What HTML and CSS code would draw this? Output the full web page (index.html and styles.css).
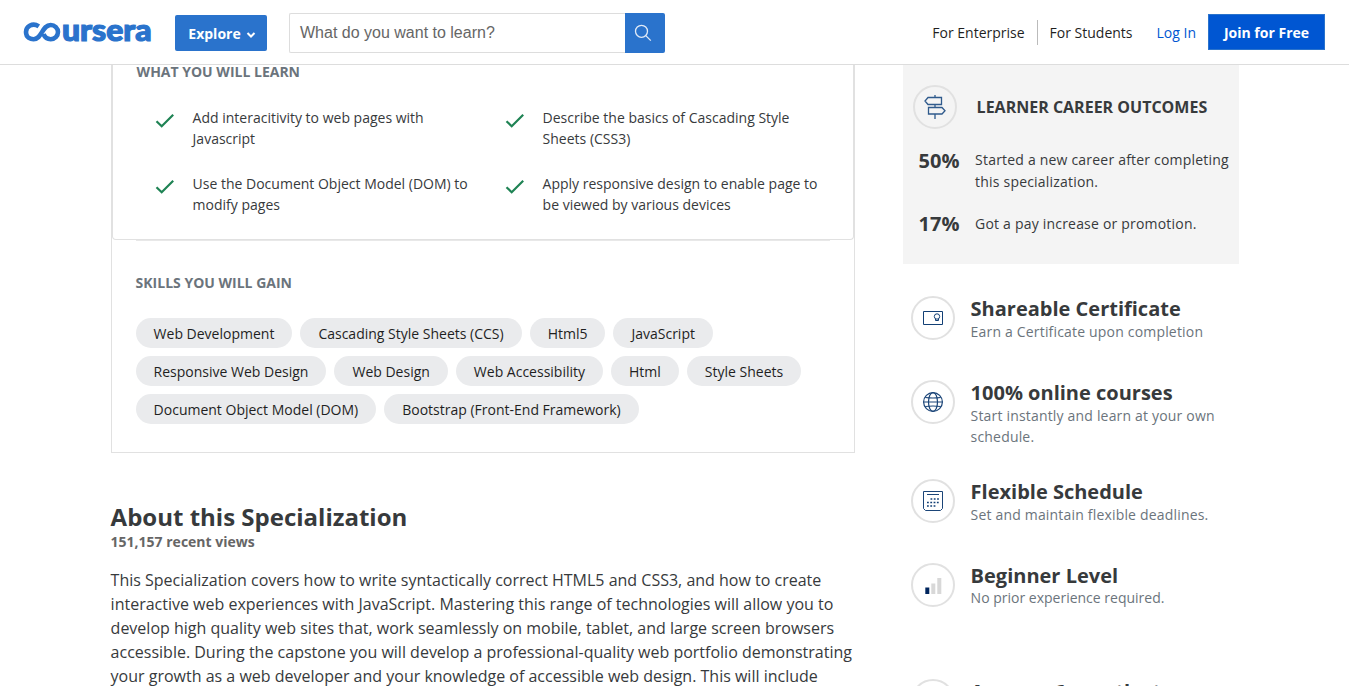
FILE: index.html
```html
<!DOCTYPE html>
<html lang="en">
<head>
<meta charset="utf-8">
<title>Coursera Specialization</title>
<link rel="stylesheet" href="styles.css">
</head>
<body>
<div class="page">
  <header class="header">
    <svg class="logo" width="128" height="40" viewBox="0 0 128 40" role="img" aria-label="coursera">
      <path d="M14.800 14.400C8.500 10.200 2 14.500 2 20c0 6 5 7.200 7.500 7.200 8.500 0 8.500-14.200 17.200-14.200 4 0 7.300 3.200 7.300 7.100s-3.300 7.100-7.300 7.100c-3.700 0-6-2-7.200-5" fill="none" stroke="#2a73cc" stroke-width="4.600"/>
      <text class="logo-text" x="38" y="28.500" textLength="89.500" lengthAdjust="spacingAndGlyphs">ursera</text>
    </svg>
    <button class="explore">Explore
      <svg width="10" height="8" viewBox="0 0 10 8"><path d="M1.500 2 5 5.500 8.500 2" fill="none" stroke="#fff" stroke-width="2"/></svg>
    </button>
    <div class="search">
      <div class="search-field">What do you want to learn?</div>
      <div class="search-button">
        <svg width="18" height="18" viewBox="0 0 18 18"><g fill="none" stroke="#e0eaf7" stroke-width="1.300"><circle cx="7.500" cy="7.300" r="6"/><path d="m11.800 11.600 5 5"/></g></svg>
      </div>
    </div>
    <nav class="nav">
      <a class="nav-link nav-first">For Enterprise</a>
      <a class="nav-link">For Students</a>
      <a class="login">Log In</a>
      <a class="join">Join for Free</a>
    </nav>
  </header>

  <div class="columns">
    <main class="main">
      <div class="card">
        <section class="learn">
          <h2 class="label">WHAT YOU WILL LEARN</h2>
          <div class="learn-grid">
            <div class="learn-item"><svg class="check" width="20" height="16" viewBox="0 0 20 16"><path d="m1.500 8.200 5.200 5L18.200 1.800"/></svg><p>Add interacitivity to web pages with<br>Javascript</p></div>
            <div class="learn-item"><svg class="check" width="20" height="16" viewBox="0 0 20 16"><path d="m1.500 8.200 5.200 5L18.200 1.800"/></svg><p>Describe the basics of Cascading Style<br>Sheets (CSS3)</p></div>
            <div class="learn-item"><svg class="check" width="20" height="16" viewBox="0 0 20 16"><path d="m1.500 8.200 5.200 5L18.200 1.800"/></svg><p>Use the Document Object Model (DOM) to<br>modify pages</p></div>
            <div class="learn-item"><svg class="check" width="20" height="16" viewBox="0 0 20 16"><path d="m1.500 8.200 5.200 5L18.200 1.800"/></svg><p>Apply responsive design to enable page to<br>be viewed by various devices</p></div>
          </div>
        </section>
        <section class="skills">
          <h2 class="label">SKILLS YOU WILL GAIN</h2>
          <div class="tags">
            <span class="tag">Web Development</span><span class="tag">Cascading Style Sheets (CCS)</span><span class="tag">Html5</span><span class="tag">JavaScript</span>
            <span class="tag">Responsive Web Design</span><span class="tag">Web Design</span><span class="tag">Web Accessibility</span><span class="tag">Html</span><span class="tag">Style Sheets</span>
            <span class="tag">Document Object Model (DOM)</span><span class="tag">Bootstrap (Front-End Framework)</span>
          </div>
        </section>
      </div>
      <h1 class="about-title">About this Specialization</h1>
      <p class="views">151,157 recent views</p>
      <p class="about">This Specialization covers how to write syntactically correct HTML5 and CSS3, and how to create<br>interactive web experiences with JavaScript. Mastering this range of technologies will allow you to<br>develop high quality web sites that, work seamlessly on mobile, tablet, and large screen browsers<br>accessible. During the capstone you will develop a professional-quality web portfolio demonstrating<br>your growth as a web developer and your knowledge of accessible web design. This will include</p>
    </main>

    <aside class="side">
      <section class="outcomes">
        <div class="outcomes-head">
          <div class="ring">
            <svg width="24" height="26" viewBox="0 0 24 26"><g fill="none" stroke="#2f5a8c" stroke-width="1.300"><path d="M12 1v2.500M12 10.500v3M12 20v5M5 3.500h13.500v7H5L2 7zM5.500 13.500H19l3 3.300L19 20H5.500z"/></g></svg>
          </div>
          <h2 class="outcomes-title">LEARNER CAREER OUTCOMES</h2>
        </div>
        <div class="stat"><strong>50%</strong><p>Started a new career after completing<br>this specialization.</p></div>
        <div class="stat stat-short"><strong>17%</strong><p>Got a pay increase or promotion.</p></div>
      </section>

      <div class="facts">
        <div class="fact">
          <div class="ring"><svg width="20" height="20" viewBox="0 0 20 20"><g fill="none" stroke="#123f75"><path d="M.5 3.500h19v13H.5z"/><circle cx="14" cy="8.500" r="2.700"/><path d="M12.500 11v1.500h3V11"/></g></svg></div>
          <div><h3>Shareable Certificate</h3><p>Earn a Certificate upon completion</p></div>
        </div>
        <div class="fact fact-long">
          <div class="ring"><svg width="20" height="20" viewBox="0 0 20 20"><g fill="none" stroke="#1b4578" stroke-width="1.200"><circle cx="10" cy="10" r="9.400"/><ellipse cx="10" cy="10" rx="4.500" ry="9.400"/><path d="M.5 10h19M2.300 5.500q7.700 1 15.400 0M2.300 14.500q7.700-1 15.400 0"/></g></svg></div>
          <div><h3>100% online courses</h3><p>Start instantly and learn at your own<br>schedule.</p></div>
        </div>
        <div class="fact">
          <div class="ring"><svg width="20" height="20" viewBox="0 0 20 20"><path d="M.5.500h19V17.500l-2 2h-15l-2-2zM4 3.500h12" fill="none" stroke="#1b4578"/><path d="M7.500 8h9M4 11.500h12.500M4 15h9" stroke="#123f75" stroke-width="1.600" stroke-dasharray="1.800 1.500"/></svg></div>
          <div><h3>Flexible Schedule</h3><p>Set and maintain flexible deadlines.</p></div>
        </div>
        <div class="fact fact-level">
          <div class="ring"><svg width="20" height="20" viewBox="0 0 20 20"><path fill="#00255d" d="M2.300 12.500h4V19h-4z"/><path fill="#d8d8d8" d="M8.300 8.500h4V19h-4zM14.300 3h4v16h-4z"/></svg></div>
          <div><h3>Beginner Level</h3><p>No prior experience required.</p></div>
        </div>
        <div class="fact">
          <div class="ring"></div>
          <div><h3>Approx. 6 months to</h3></div>
        </div>
      </div>
    </aside>
  </div>
</div>
</body>
</html>
```

FILE: styles.css
```css
* { box-sizing: border-box; }
html { overflow: hidden; }
body { margin: 0; background: #fff; color: #373a3c; font: 14px/21px "Open Sans", sans-serif; }
h1, h2, h3, p { margin: 0; }
.page { width: 1349px; height: 686px; overflow: hidden; }

.header { display: flex; align-items: center; height: 65px; padding: 0 24px; border-bottom: 1px solid #ddd; }
.logo { display: block; flex: none; overflow: visible; }
.logo-text { font: 900 30px Lato, sans-serif; fill: #2a73cc; stroke: #2a73cc; stroke-width: 1.2px; }
.explore { display: flex; align-items: center; justify-content: center; gap: 5px; width: 92px; height: 36px; margin: 2px 0 0 23px; padding: 0 0 0 2px; border: 0; border-radius: 2px; background: #2a73cc; color: #fff; font: 700 14px "Open Sans", sans-serif; }
.explore svg { margin-top: 3px; }
.search { display: flex; width: 376px; height: 40px; margin: 2px 0 0 22px; }
.search-field { flex: 1; padding-left: 10px; border: 1px solid #ddd; border-right: 0; border-radius: 2px 0 0 2px; color: #666; font: 16px/38px "Liberation Sans", Arial, sans-serif; }
.search-button { display: flex; align-items: center; justify-content: center; width: 40px; padding-right: 4px; border-radius: 0 2px 2px 0; background: #2a73cc; }
.nav { display: flex; align-items: center; margin-left: auto; color: #1f1f1f; }
.nav-link { line-height: 25px; }
.nav-first { padding-right: 12px; margin-right: 12px; border-right: 1px solid #bbb; }
.login { margin-left: 24px; color: #0056d2; }
.join { width: 117px; height: 36px; margin-left: 12px; border: 1px solid #2a73cc; background: #0056d2; color: #fff; font-weight: 700; line-height: 36px; text-align: center; }

.columns { display: flex; gap: 48px; padding-left: 110.6px; }
.main { width: 744px; }
.card { height: 388px; border: 1px solid #e1e1e1; border-top: 0; }
.learn { height: 175px; padding: 0 20px 0 24px; border: 1px solid #e1e1e1; border-top: 0; border-radius: 0 0 4px 4px; }
.label { color: #6b747c; font-size: 14px; font-weight: 700; line-height: 14px; }
.learn-grid { display: grid; grid-template-columns: 350px 350px; row-gap: 24px; padding-top: 28px; }
.learn-item { display: flex; gap: 17.5px; padding-left: 18.5px; white-space: nowrap; }
.check { margin-top: 6px; }
.check path { fill: none; stroke: #1f8354; stroke-width: 2.2; }
.skills { margin: 0 24px; border-top: 1px solid #e8e8e8; padding-top: 35px; }
.tags { display: flex; flex-wrap: wrap; gap: 8px; padding-top: 28px; }
.tag { height: 30px; padding: 0 18px; border-radius: 15px; background: #eaebed; color: #1f1f1f; line-height: 32px; }
.about-title { margin-top: 48px; font-size: 24px; font-weight: 700; line-height: 32px; }
.views { color: #666; font-weight: 700; line-height: 18px; }
.about { padding-top: 17px; font-size: 16px; line-height: 24px; white-space: nowrap; }

.side { width: 336px; }
.outcomes { height: 199px; padding: 20px 10px 0; background: #f4f4f4; }
.outcomes-head { display: flex; align-items: center; gap: 20px; margin-bottom: 20px; }
.outcomes-title { font-size: 16px; line-height: 24px; }
.ring { display: flex; flex: none; align-items: center; justify-content: center; width: 44px; height: 44px; border: 2px solid #e1e1e1; border-radius: 50%; }
.stat { display: grid; grid-template-columns: 56.5px 1fr; padding-left: 6px; margin-bottom: 20px; line-height: 22px; letter-spacing: .2px; white-space: nowrap; }
.stat strong { font-size: 20px; line-height: 24px; letter-spacing: 0; }
.stat-short strong { line-height: 22px; }
.facts { padding: 32px 8px 0; }
.fact { display: flex; gap: 16px; height: 84px; white-space: nowrap; }
.fact-long { height: 99px; }
.fact-level { height: 116px; }
.fact h3 { font-size: 20px; line-height: 25px; }
.fact p { color: #6b747c; letter-spacing: .18px; }
.fact-level p { line-height: 19px; letter-spacing: 0; }
```
